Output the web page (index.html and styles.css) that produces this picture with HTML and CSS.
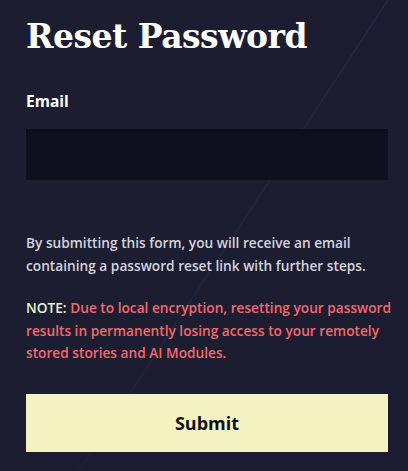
FILE: index.html
```html
<!DOCTYPE html>
<html lang="en">
<head>
<meta charset="utf-8">
<title>Reset Password</title>
<link rel="stylesheet" href="styles.css">
</head>
<body>
<svg class="streak" width="408" height="471" viewBox="0 0 408 471" aria-hidden="true">
  <defs>
    <linearGradient id="streakFade" x1="0" y1="0" x2="0" y2="1">
      <stop offset="0" stop-color="#2c2e46" stop-opacity="0.7"/>
      <stop offset="1" stop-color="#2c2e46" stop-opacity="0.2"/>
    </linearGradient>
  </defs>
  <line x1="388" y1="0" x2="70" y2="485" stroke="url(#streakFade)" stroke-width="1.2"/>
</svg>
<main class="panel">
  <h1 class="title">Reset Password</h1>
  <form class="form">
    <label class="field-label" for="email">Email</label>
    <input class="field-input" id="email" type="email">
    <p class="info">By submitting this form, you will receive an email containing a password reset link with further steps.</p>
    <p class="warning"><strong class="warning-tag">NOTE:</strong> Due to local encryption, resetting your password results in permanently losing access to your remotely stored stories and AI Modules.</p>
    <button class="submit" type="button">Submit</button>
  </form>
</main>
</body>
</html>
```
FILE: styles.css
```css
html, body {
  margin: 0;
  padding: 0;
}

body {
  background: #1c1d30;
  width: 408px;
  height: 471px;
  overflow: hidden;
  position: relative;
  font-family: "Open Sans", "Noto Sans", sans-serif;
}

.streak {
  position: absolute;
  left: 0;
  top: 0;
  pointer-events: none;
}

.panel {
  position: relative;
  padding: 14px 20px 0 26px;
  display: flex;
  flex-direction: column;
}

.title {
  margin: 0;
  font-family: "DejaVu Serif", serif;
  font-weight: bold;
  font-size: 33px;
  line-height: 46px;
  color: #ffffff;
  letter-spacing: -0.5px;
}

.form {
  display: flex;
  flex-direction: column;
  margin-top: 31px;
}

.field-label {
  font-weight: 700;
  font-size: 15.5px;
  line-height: 20px;
  color: #ffffff;
}

.field-input {
  margin-top: 18px;
  height: 51px;
  box-sizing: border-box;
  border: none;
  border-top: 2px solid #0c0d1a;
  background: #0f101f;
  outline: none;
  padding: 0 12px;
  color: #ffffff;
}

.info,
.warning {
  margin-right: -18px;
  font-weight: 600;
  font-size: 13.7px;
  line-height: 22.5px;
}

.info {
  margin-top: 52px;
  margin-bottom: 0;
  color: #d3d3df;
}

.warning {
  margin-top: 20px;
  margin-bottom: 0;
  color: #f2686f;
}

.warning-tag {
  font-weight: 600;
  color: #e8f4d4;
}

.submit {
  margin-top: 29px;
  height: 58px;
  border: none;
  background: #f5f2c1;
  color: #10111c;
  font-family: "Open Sans", "Noto Sans", sans-serif;
  font-weight: 700;
  font-size: 18px;
  cursor: pointer;
}
```
